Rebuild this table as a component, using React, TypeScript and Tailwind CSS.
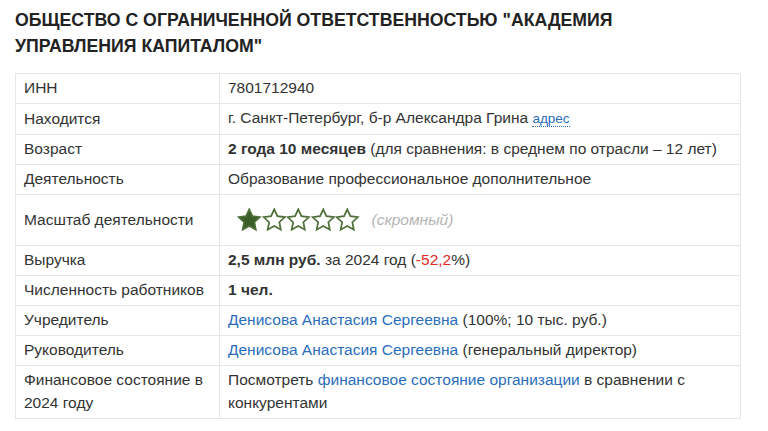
import React from "react";

type Row = { label: React.ReactNode; value: React.ReactNode; tall?: boolean };

function Star({ filled }: { filled?: boolean }) {
  return (
    <svg width="24.5" height="24" viewBox="0 0 24 23.5" className="block">
      <path
        d="M12 1.3l3.1 6.7 7.3.9-5.4 5 1.4 7.3L12 17.6l-6.4 3.6 1.4-7.3-5.4-5 7.3-.9z"
        fill={filled ? "#3b5e28" : "#fff"}
        stroke="#4e6e3a"
        strokeWidth="1.7"
        strokeLinejoin="miter"
      />
    </svg>
  );
}

const link = "text-[#2a6ebb]";

const rows: Row[] = [
  { label: "ИНН", value: "7801712940" },
  {
    label: "Находится",
    value: (
      <>
        г. Санкт-Петербург, б-р Александра Грина{" "}
        <span className={`${link} text-[13.5px] border-b border-dotted border-[#2a6ebb]`}>адрес</span>
      </>
    ),
  },
  {
    label: "Возраст",
    value: (
      <>
        <b>2 года 10 месяцев</b> (для сравнения: в среднем по отрасли – 12 лет)
      </>
    ),
  },
  { label: "Деятельность", value: "Образование профессиональное дополнительное" },
  {
    label: "Масштаб деятельности",
    tall: true,
    value: (
      <div className="flex items-center pl-[9px]">
        <div className="flex">
          <Star filled />
          <Star />
          <Star />
          <Star />
          <Star />
        </div>
        <span className="ml-[12px] italic text-[#b5b5b5]">(скромный)</span>
      </div>
    ),
  },
  {
    label: "Выручка",
    value: (
      <>
        <b>2,5 млн руб.</b> за 2024 год (<span className="text-[#e0261f]">-52,2</span>%)
      </>
    ),
  },
  { label: "Численность работников", value: <b>1 чел.</b> },
  {
    label: "Учредитель",
    value: (
      <>
        <span className={link}>Денисова Анастасия Сергеевна</span> (100%; 10 тыс. руб.)
      </>
    ),
  },
  {
    label: "Руководитель",
    value: (
      <>
        <span className={link}>Денисова Анастасия Сергеевна</span> (генеральный директор)
      </>
    ),
  },
  {
    label: "Финансовое состояние в 2024 году",
    value: (
      <>
        Посмотреть <span className={link}>финансовое состояние организации</span> в сравнении с
        конкурентами
      </>
    ),
  },
];

export default function App() {
  return (
    <div
      className="w-[768px] h-[431px] bg-white text-[#333] overflow-hidden"
      style={{ fontFamily: '"Liberation Sans", Arial, sans-serif' }}
    >
      <h1 className="w-[700px] pl-[15px] pt-[7px] text-[17.7px] leading-[26px] font-bold text-[#222]">
        ОБЩЕСТВО С ОГРАНИЧЕННОЙ ОТВЕТСТВЕННОСТЬЮ "АКАДЕМИЯ УПРАВЛЕНИЯ КАПИТАЛОМ"
      </h1>
      <table className="ml-[15px] mt-[14px] w-[726px] border-collapse text-[15.5px] leading-[22.5px]">
        <tbody>
          {rows.map((r, i) => (
            <tr key={i} className={r.tall ? "h-[51px]" : ""}>
              <td className="w-[204px] border border-[#e6e6e6] pl-[8px] pr-2 pt-[3px] pb-[3.5px] align-middle">
                {r.label}
              </td>
              <td className="border border-[#e6e6e6] pl-[8px] pr-2 pt-[3px] pb-[3.5px] align-middle">
                {r.value}
              </td>
            </tr>
          ))}
        </tbody>
      </table>
    </div>
  );
}
